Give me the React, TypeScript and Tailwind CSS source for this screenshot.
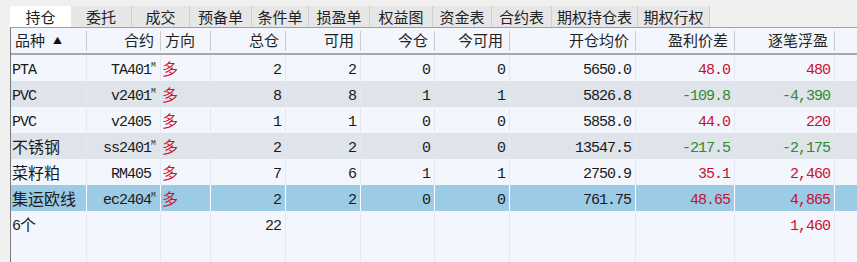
import React from "react";

const cjk = '"Noto Sans CJK SC", "Noto Sans", sans-serif';
const mono = '"Liberation Mono", "Noto Sans CJK SC", monospace';

interface Col {
  title: string;
  width: string;
  align: "left" | "right";
}

const cols: Col[] = [
  { title: "品种", width: "w-[76px]", align: "left" },
  { title: "合约", width: "w-[74px]", align: "right" },
  { title: "方向", width: "w-[50px]", align: "left" },
  { title: "总仓", width: "w-[75px]", align: "right" },
  { title: "可用", width: "w-[75px]", align: "right" },
  { title: "今仓", width: "w-[74px]", align: "right" },
  { title: "今可用", width: "w-[75px]", align: "right" },
  { title: "开仓均价", width: "w-[126px]", align: "right" },
  { title: "盈利价差", width: "w-[99px]", align: "right" },
  { title: "逐笔浮盈", width: "w-[100px]", align: "right" },
];

const tabs = [
  { label: "持仓", w: "w-[61px]" },
  { label: "委托", w: "w-[61px]" },
  { label: "成交", w: "w-[58px]" },
  { label: "预备单", w: "w-[62px]" },
  { label: "条件单", w: "w-[57px]" },
  { label: "损盈单", w: "w-[61px]" },
  { label: "权益图", w: "w-[63px]" },
  { label: "资金表", w: "w-[59px]" },
  { label: "合约表", w: "w-[60px]" },
  { label: "期权持仓表", w: "w-[86px]" },
  { label: "期权行权", w: "w-[72px]" },
];

interface Row {
  name: string;
  code: string;
  main: boolean;
  total: string;
  avail: string;
  today: string;
  todayAvail: string;
  price: string;
  diff: string;
  pnl: string;
  up: boolean;
}

const rows: Row[] = [
  { name: "PTA", code: "TA401", main: true, total: "2", avail: "2", today: "0", todayAvail: "0", price: "5650.0", diff: "48.0", pnl: "480", up: true },
  { name: "PVC", code: "v2401", main: true, total: "8", avail: "8", today: "1", todayAvail: "1", price: "5826.8", diff: "-109.8", pnl: "-4,390", up: false },
  { name: "PVC", code: "v2405", main: false, total: "1", avail: "1", today: "0", todayAvail: "0", price: "5858.0", diff: "44.0", pnl: "220", up: true },
  { name: "不锈钢", code: "ss2401", main: true, total: "2", avail: "2", today: "0", todayAvail: "0", price: "13547.5", diff: "-217.5", pnl: "-2,175", up: false },
  { name: "菜籽粕", code: "RM405", main: false, total: "7", avail: "6", today: "1", todayAvail: "1", price: "2750.9", diff: "35.1", pnl: "2,460", up: true },
  { name: "集运欧线", code: "ec2404", main: true, total: "2", avail: "2", today: "0", todayAvail: "0", price: "761.75", diff: "48.65", pnl: "4,865", up: true },
];

const Cell: React.FC<{ col: number; sel?: boolean; children?: React.ReactNode; className?: string }> = ({
  col,
  sel,
  children,
  className = "",
}) => (
  <div
    className={`${cols[col].width} shrink-0 h-full flex items-center px-[4px] border-r ${
      sel ? "border-white" : "border-[#e4e9f1]"
    } ${cols[col].align === "right" ? "justify-end" : "justify-start"} ${className}`}
  >
    {children}
  </div>
);

// half-width latin/digits in a serif monospace, nudged down to line up with the CJK glyphs
const Num: React.FC<{ children: React.ReactNode; color?: string }> = ({ children, color = "text-[#1a1a1a]" }) => (
  <span className={`pt-[6px] text-[15px] tracking-[-1px] ${color}`} style={{ fontFamily: mono }}>
    {children}
  </span>
);

const Han: React.FC<{ children: React.ReactNode; color?: string }> = ({ children, color = "text-[#1a1a1a]" }) => (
  <span className={`pb-[1px] text-[16px] ${color}`} style={{ fontFamily: cjk }}>
    {children}
  </span>
);

export default function App() {
  return (
    <div className="w-[857px] h-[262px] bg-[#f0f0f0] overflow-hidden flex flex-col pl-[10px] select-none">
      {/* tab bar */}
      <div className="h-[28px] shrink-0 flex items-end border-b border-[#a0a0a0]">
        {tabs.map((t, i) => (
          <div
            key={t.label}
            className={`${t.w} h-[21px] flex items-center justify-center text-[15px] leading-none text-[#222] ${
              i === 0 ? "bg-white" : "bg-[#e6e6e6] border-r border-[#cfcfcf]"
            }`}
            style={{ fontFamily: cjk }}
          >
            {t.label}
          </div>
        ))}
      </div>

      {/* table */}
      <div className="flex-1 flex flex-col bg-[#f3f7fd] border-l border-[#7a7a7a]">
        {/* header */}
        <div
          className="h-[27px] shrink-0 flex items-center border-b-[2px] border-double border-[#a8a8a8] text-[15px] text-[#222]"
          style={{ fontFamily: cjk }}
        >
          {cols.map((c, i) => (
            <div
              key={c.title}
              className={`${c.width} shrink-0 h-[20px] flex items-center px-[4px] border-r border-[#c9ccd1] ${
                c.align === "right" ? "justify-end pr-[6px]" : "justify-start"
              }`}
            >
              {c.title}
              {i === 0 && <span className="ml-[8px] text-[9px] text-[#111]">▲</span>}
            </div>
          ))}
        </div>

        {rows.map((r, idx) => {
          const sel = idx === 5;
          const bg = sel ? "bg-[#9ccbe6]" : idx % 2 === 1 ? "bg-[#dfe3ea]" : "bg-[#f3f7fd]";
          const color = r.up ? "text-[#c8102e]" : "text-[#2e8b2e]";
          const isLatin = /^[A-Za-z]+$/.test(r.name);
          return (
            <div key={idx} className={`h-[26px] shrink-0 flex items-center ${bg}`}>
              <Cell col={0} sel={sel} className="!pl-[1px]">
                {isLatin ? <Num>{r.name}</Num> : <Han>{r.name}</Han>}
              </Cell>
              <Cell col={1} sel={sel} className="!px-0 !pr-[1px]">
                <Num>{r.code}</Num>
                <span
                  className="w-[8px] self-start mt-[6px] text-[8px] leading-none text-[#333]"
                  style={{ fontFamily: mono }}
                >
                  {r.main ? "M" : ""}
                </span>
              </Cell>
              <Cell col={2} sel={sel} className="!px-[1px]">
                <Han color="text-[#d0102c]">多</Han>
              </Cell>
              <Cell col={3} sel={sel}>
                <Num>{r.total}</Num>
              </Cell>
              <Cell col={4} sel={sel}>
                <Num>{r.avail}</Num>
              </Cell>
              <Cell col={5} sel={sel}>
                <Num>{r.today}</Num>
              </Cell>
              <Cell col={6} sel={sel}>
                <Num>{r.todayAvail}</Num>
              </Cell>
              <Cell col={7} sel={sel}>
                <Num>{r.price}</Num>
              </Cell>
              <Cell col={8} sel={sel}>
                <Num color={color}>{r.diff}</Num>
              </Cell>
              <Cell col={9} sel={sel}>
                <Num color={color}>{r.pnl}</Num>
              </Cell>
              <div className="flex-1 h-full" />
            </div>
          );
        })}

        {/* summary row */}
        <div className="h-[26px] shrink-0 flex items-center">
          <Cell col={0} className="!pl-[1px]">
            <Num>6</Num>
            <Han>个</Han>
          </Cell>
          <Cell col={1} />
          <Cell col={2} />
          <Cell col={3}>
            <Num>22</Num>
          </Cell>
          <Cell col={4} />
          <Cell col={5} />
          <Cell col={6} />
          <Cell col={7} />
          <Cell col={8} />
          <Cell col={9}>
            <Num color="text-[#c8102e]">1,460</Num>
          </Cell>
          <div className="flex-1 h-full" />
        </div>

        {/* blank filler */}
        <div className="flex-1 flex">
          {cols.map((c, i) => (
            <Cell key={i} col={i} />
          ))}
        </div>
      </div>
    </div>
  );
}
